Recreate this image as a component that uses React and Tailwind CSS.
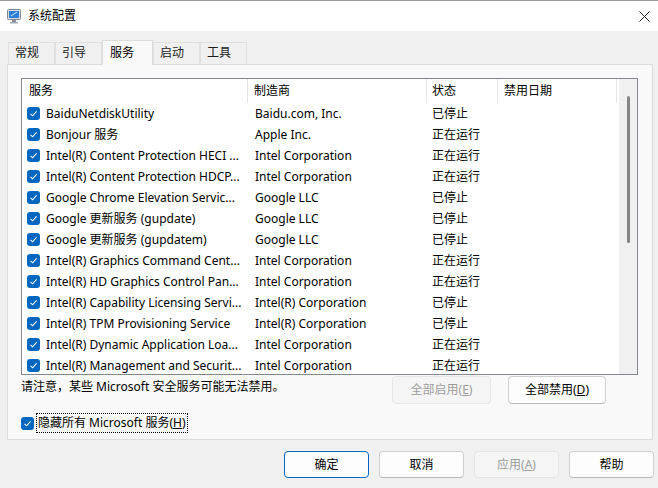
import React from "react";

const FONT = { fontFamily: "'Segoe UI', 'Noto Sans', 'Noto Sans CJK SC', sans-serif" };

const services = [
    ["BaiduNetdiskUtility", "Baidu.com, Inc.", "已停止"],
    ["Bonjour 服务", "Apple Inc.", "正在运行"],
    ["Intel(R) Content Protection HECI ...", "Intel Corporation", "正在运行"],
    ["Intel(R) Content Protection HDCP...", "Intel Corporation", "正在运行"],
    ["Google Chrome Elevation Servic...", "Google LLC", "已停止"],
    ["Google 更新服务 (gupdate)", "Google LLC", "已停止"],
    ["Google 更新服务 (gupdatem)", "Google LLC", "已停止"],
    ["Intel(R) Graphics Command Cent...", "Intel Corporation", "正在运行"],
    ["Intel(R) HD Graphics Control Pan...", "Intel Corporation", "正在运行"],
    ["Intel(R) Capability Licensing Servi...", "Intel(R) Corporation", "已停止"],
    ["Intel(R) TPM Provisioning Service", "Intel(R) Corporation", "已停止"],
    ["Intel(R) Dynamic Application Loa...", "Intel Corporation", "正在运行"],
    ["Intel(R) Management and Securit...", "Intel Corporation", "正在运行"],
];

const tabs = ["常规", "引导", "服务", "启动", "工具"];

function Check() {
    return (
        <span className="w-[13px] h-[13px] shrink-0 rounded-[3px] bg-[#0067c0] flex items-center justify-center">
            <svg width="9" height="9" viewBox="0 0 9 9">
                <path d="M1.5 4.8 L3.6 6.8 L7.6 2.4" fill="none" stroke="white" strokeWidth="1.1" />
            </svg>
        </span>
    );
}

function AppIcon() {
    return (
        <svg width="15" height="15" viewBox="0 0 15 15">
            <rect x="0.5" y="0.5" width="13" height="10" rx="1" fill="#d9dde3" stroke="#7d8796" />
            <rect x="2" y="2" width="10" height="7" fill="#2f7fd6" />
            <path d="M4 7 L10 3" stroke="#cfe6ff" strokeWidth="1" />
            <rect x="5" y="11" width="4" height="2" fill="#8a929e" />
            <rect x="3" y="13" width="8" height="1.5" fill="#a3aab4" />
        </svg>
    );
}

function Btn({ children, disabled, primary, className = "" }) {
    const base = "h-[27px] rounded-[4px] flex items-center justify-center text-[12px] ";
    let look = "bg-[#fdfdfd] border border-[#d0d0d0] border-b-[#b9b9b9] text-black";
    if (disabled) look = "bg-[#f5f5f5] border border-[#e5e5e5] text-[#9d9d9d]";
    if (primary) look = "bg-[#fdfdfd] border border-[#0067c0] text-black";
    return <div className={base + look + " " + className}>{children}</div>;
}

export default function App() {
    return (
        <div style={FONT} className="w-[658px] h-[488px] bg-[#f0f0f0] border-t border-[#9a9a9a] text-[12px] text-black overflow-hidden flex flex-col">
            {/* title bar */}
            <div className="h-[30px] bg-white flex items-center shrink-0">
                <div className="ml-[7px] mt-[1px]"><AppIcon /></div>
                <span className="ml-[6px] text-[12px]">系统配置</span>
                <div className="ml-auto mr-[6px] w-[16px] flex items-center justify-center">
                    <svg width="11" height="11" viewBox="0 0 11 11">
                        <path d="M0.5 0.5 L10.5 10.5 M10.5 0.5 L0.5 10.5" stroke="#222" strokeWidth="1" />
                    </svg>
                </div>
            </div>

            {/* tabs */}
            <div className="flex items-end h-[33px] pl-[8px] shrink-0">
                {tabs.map((t) =>
                    t === "服务" ? (
                        <div key={t} className="w-[51px] h-[25px] -mb-px relative z-10 bg-[#f9f9f9] border border-b-0 border-[#dcdcdc] pl-[7px] pt-[3px]">{t}</div>
                    ) : (
                        <div key={t} className="w-[47px] h-[22px] bg-[#f0f0f0] border border-b-0 border-[#e0e0e0] pl-[6px] pt-[1px] text-[#1a1a1a]">{t}</div>
                    )
                )}
            </div>

            {/* panel */}
            <div className="ml-[7px] mr-[5px] h-[376px] bg-[#f9f9f9] border border-[#dcdcdc] flex flex-col pl-[13px] pr-[14px] pt-[13px]">
                {/* list */}
                <div className="h-[297px] border border-[#828790] bg-white flex overflow-hidden">
                    <div className="flex-1 flex flex-col">
                        <div className="h-[24px] flex items-stretch shrink-0">
                            <div className="w-[226px] border-r border-[#e5e5e5] pl-[7px] flex items-center">服务</div>
                            <div className="w-[179px] border-r border-[#e5e5e5] pl-[6px] flex items-center">制造商</div>
                            <div className="w-[71px] border-r border-[#e5e5e5] pl-[5px] flex items-center">状态</div>
                            <div className="w-[119px] border-r border-[#e5e5e5] pl-[6px] flex items-center">禁用日期</div>
                        </div>
                        <div className="flex flex-col overflow-hidden">
                            {services.map(([name, maker, status], i) => (
                                <div key={i} className="h-[21px] flex items-center shrink-0">
                                    <div className="w-[226px] pl-[5px] flex items-center gap-[6px] whitespace-nowrap overflow-hidden">
                                        <Check />
                                        <span>{name}</span>
                                    </div>
                                    <div className="w-[179px] pl-[7px] whitespace-nowrap overflow-hidden">{maker}</div>
                                    <div className="w-[71px] pl-[5px] whitespace-nowrap">{status}</div>
                                    <div className="w-[119px]"></div>
                                </div>
                            ))}
                        </div>
                    </div>
                    <div className="w-[18px] bg-[#f0f0f0] flex justify-center shrink-0">
                        <div className="w-[3px] h-[147px] mt-[17px] bg-[#858585] rounded-full"></div>
                    </div>
                </div>

                {/* note + buttons */}
                <div className="flex items-start h-[30px] mt-px">
                    <span className="mt-[2px]">请注意，某些 Microsoft 安全服务可能无法禁用。</span>
                    <Btn disabled className="ml-auto w-[99px] h-[28px]">全部启用(<u>E</u>)</Btn>
                    <Btn className="ml-[17px] mr-[32px] w-[98px] h-[28px]">全部禁用(<u>D</u>)</Btn>
                </div>

                <div className="flex items-center mt-[7px]">
                    <Check />
                    <span className="ml-[2px] border border-dotted border-black px-px leading-[18px]">
                        隐藏所有 Microsoft 服务(<u>H</u>)
                    </span>
                </div>
            </div>

            {/* bottom buttons */}
            <div className="flex justify-end gap-[10px] pr-[4px] mt-[11px]">
                <Btn primary className="w-[85px]">确定</Btn>
                <Btn className="w-[85px]">取消</Btn>
                <Btn disabled className="w-[85px]">应用(<u>A</u>)</Btn>
                <Btn className="w-[85px]">帮助</Btn>
            </div>
        </div>
    );
}
